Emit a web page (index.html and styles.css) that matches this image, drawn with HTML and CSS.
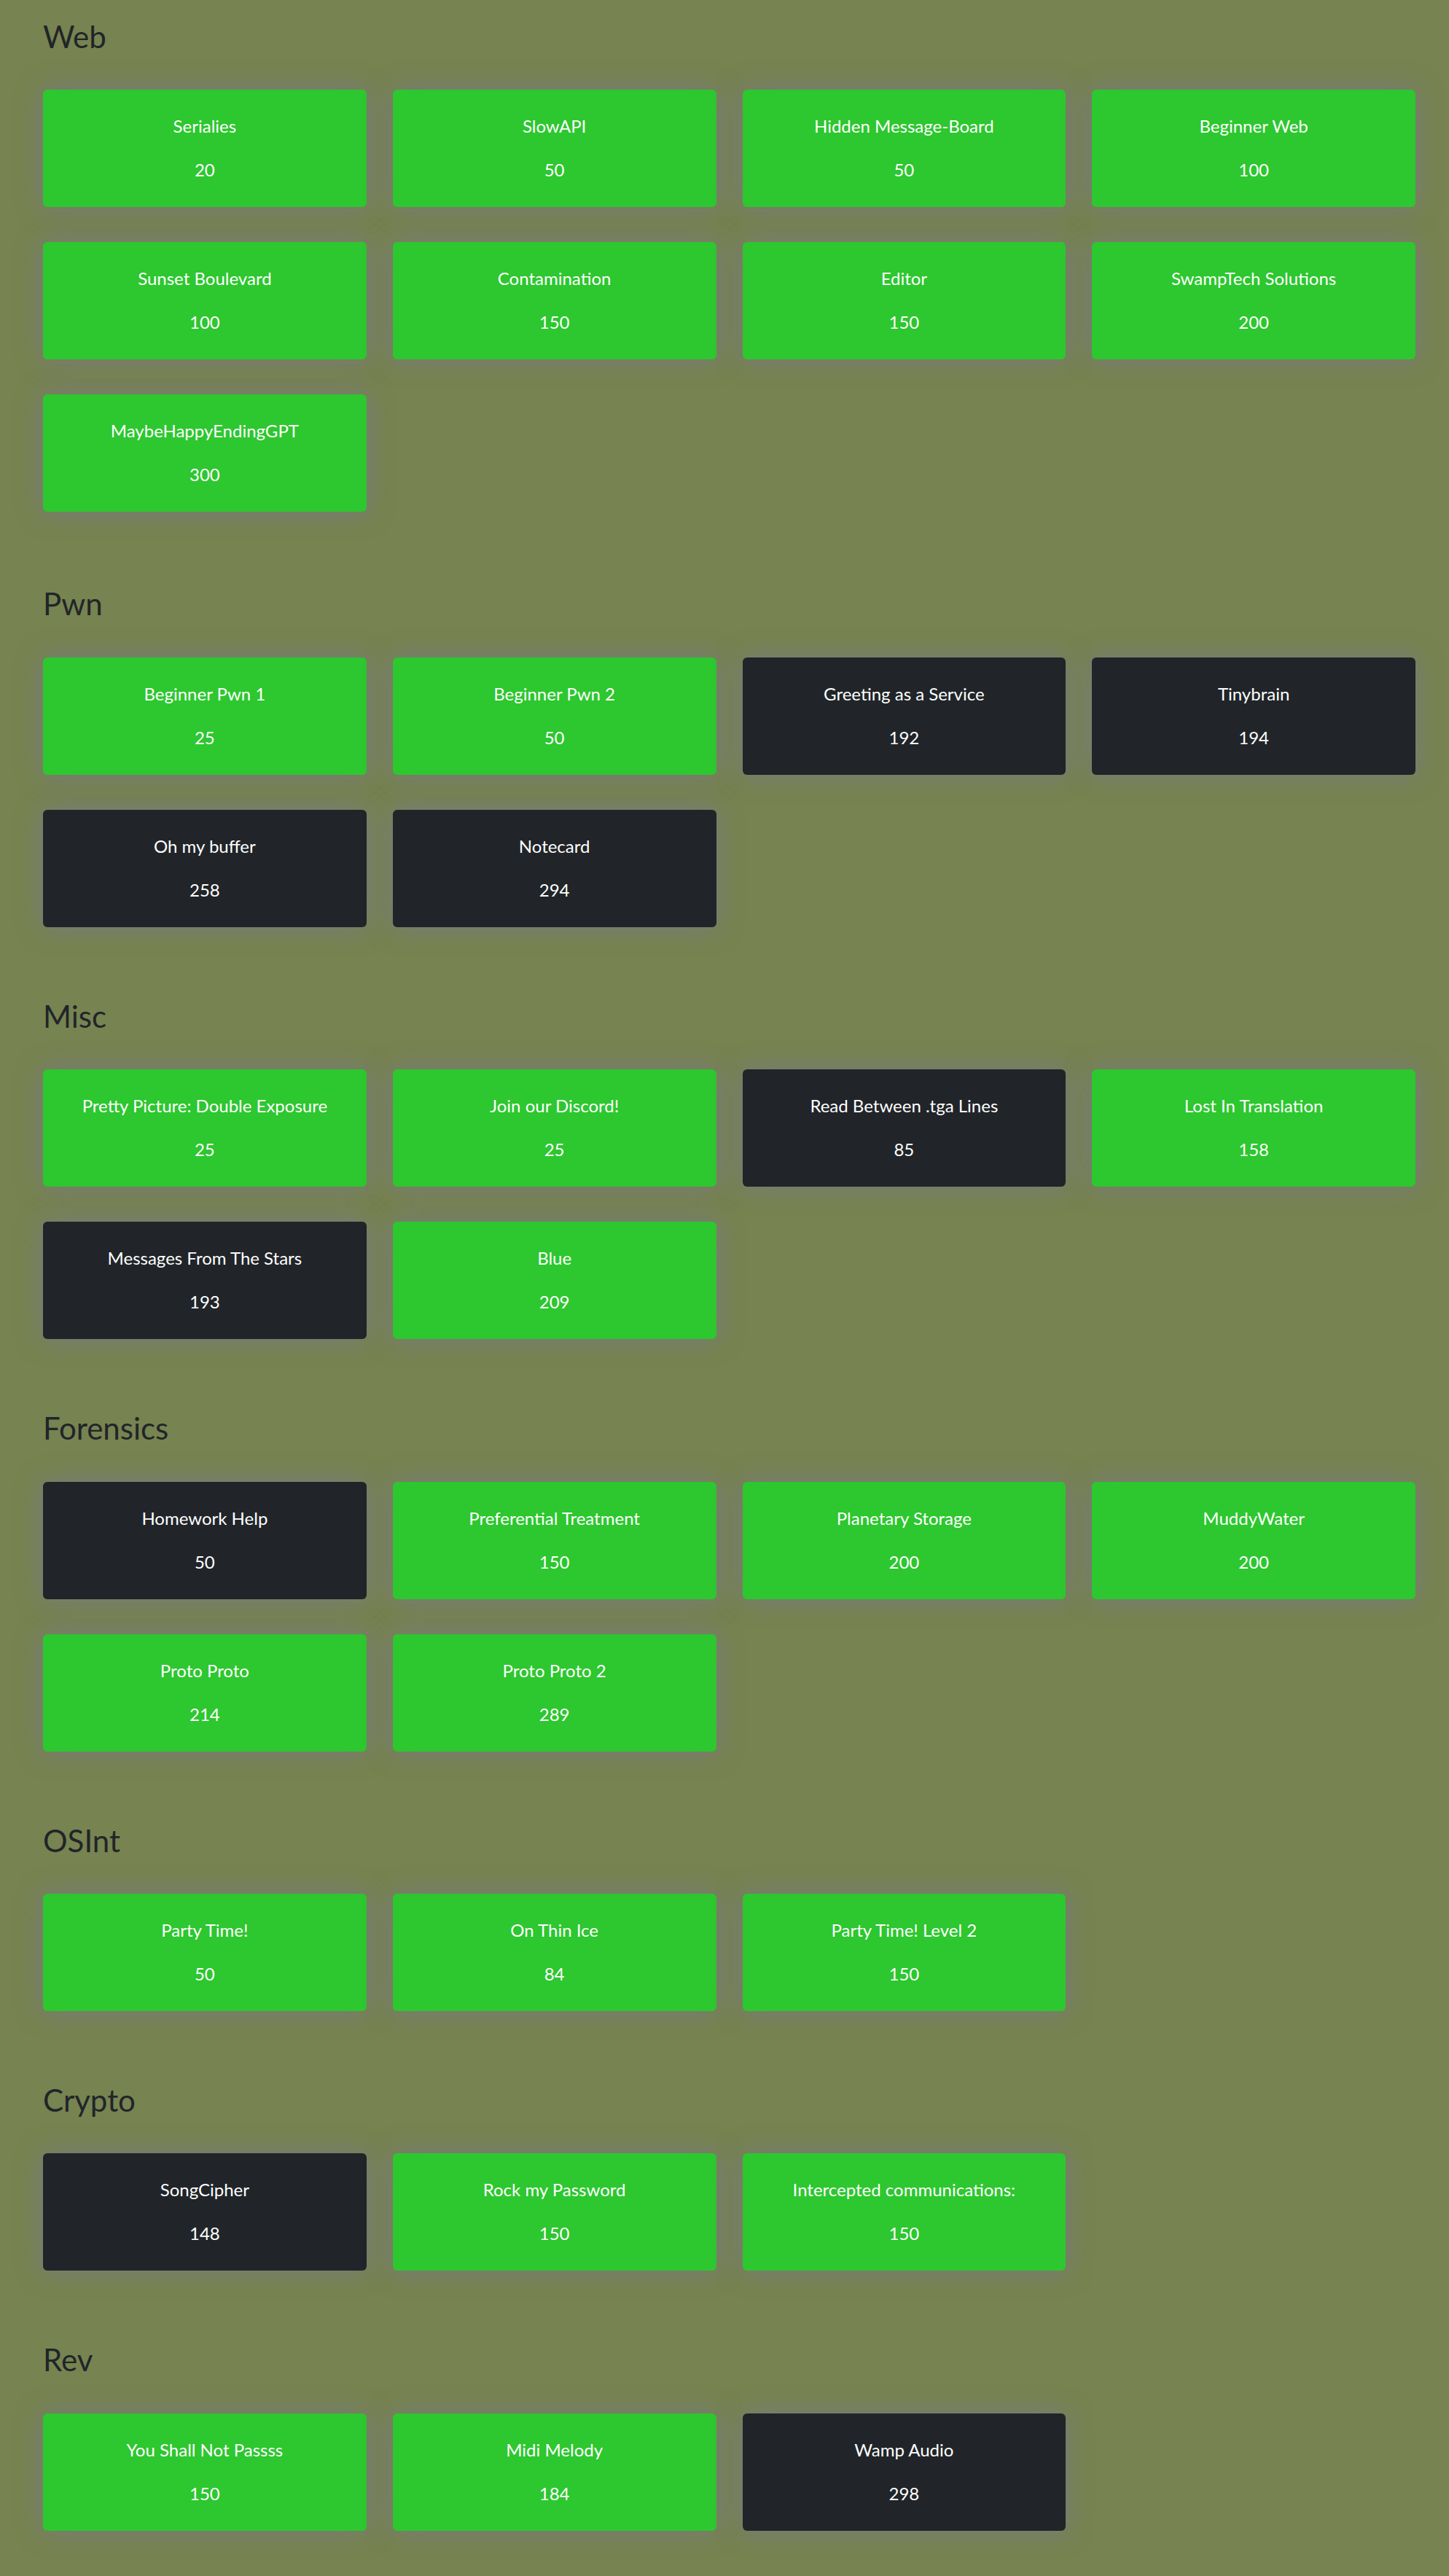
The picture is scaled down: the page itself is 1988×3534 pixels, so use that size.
FILE: index.html
```html
<!DOCTYPE html>
<html lang="en">
<head>
<meta charset="utf-8">
<title>Challenges</title>
<link rel="stylesheet" href="styles.css">
</head>
<body>
<main class="board">
  <section class="category">
    <h2 class="category-title">Web</h2>
    <div class="grid">
      <div class="card solved"><div class="card-name">Serialies</div><div class="card-points">20</div></div>
      <div class="card solved"><div class="card-name">SlowAPI</div><div class="card-points">50</div></div>
      <div class="card solved"><div class="card-name">Hidden Message-Board</div><div class="card-points">50</div></div>
      <div class="card solved"><div class="card-name">Beginner Web</div><div class="card-points">100</div></div>
      <div class="card solved"><div class="card-name">Sunset Boulevard</div><div class="card-points">100</div></div>
      <div class="card solved"><div class="card-name">Contamination</div><div class="card-points">150</div></div>
      <div class="card solved"><div class="card-name">Editor</div><div class="card-points">150</div></div>
      <div class="card solved"><div class="card-name">SwampTech Solutions</div><div class="card-points">200</div></div>
      <div class="card solved"><div class="card-name">MaybeHappyEndingGPT</div><div class="card-points">300</div></div>
    </div>
  </section>

  <section class="category">
    <h2 class="category-title">Pwn</h2>
    <div class="grid">
      <div class="card solved"><div class="card-name">Beginner Pwn 1</div><div class="card-points">25</div></div>
      <div class="card solved"><div class="card-name">Beginner Pwn 2</div><div class="card-points">50</div></div>
      <div class="card open"><div class="card-name">Greeting as a Service</div><div class="card-points">192</div></div>
      <div class="card open"><div class="card-name">Tinybrain</div><div class="card-points">194</div></div>
      <div class="card open"><div class="card-name">Oh my buffer</div><div class="card-points">258</div></div>
      <div class="card open"><div class="card-name">Notecard</div><div class="card-points">294</div></div>
    </div>
  </section>

  <section class="category">
    <h2 class="category-title">Misc</h2>
    <div class="grid">
      <div class="card solved"><div class="card-name">Pretty Picture: Double Exposure</div><div class="card-points">25</div></div>
      <div class="card solved"><div class="card-name">Join our Discord!</div><div class="card-points">25</div></div>
      <div class="card open"><div class="card-name">Read Between .tga Lines</div><div class="card-points">85</div></div>
      <div class="card solved"><div class="card-name">Lost In Translation</div><div class="card-points">158</div></div>
      <div class="card open"><div class="card-name">Messages From The Stars</div><div class="card-points">193</div></div>
      <div class="card solved"><div class="card-name">Blue</div><div class="card-points">209</div></div>
    </div>
  </section>

  <section class="category">
    <h2 class="category-title">Forensics</h2>
    <div class="grid">
      <div class="card open"><div class="card-name">Homework Help</div><div class="card-points">50</div></div>
      <div class="card solved"><div class="card-name">Preferential Treatment</div><div class="card-points">150</div></div>
      <div class="card solved"><div class="card-name">Planetary Storage</div><div class="card-points">200</div></div>
      <div class="card solved"><div class="card-name">MuddyWater</div><div class="card-points">200</div></div>
      <div class="card solved"><div class="card-name">Proto Proto</div><div class="card-points">214</div></div>
      <div class="card solved"><div class="card-name">Proto Proto 2</div><div class="card-points">289</div></div>
    </div>
  </section>

  <section class="category">
    <h2 class="category-title">OSInt</h2>
    <div class="grid">
      <div class="card solved"><div class="card-name">Party Time!</div><div class="card-points">50</div></div>
      <div class="card solved"><div class="card-name">On Thin Ice</div><div class="card-points">84</div></div>
      <div class="card solved"><div class="card-name">Party Time! Level 2</div><div class="card-points">150</div></div>
    </div>
  </section>

  <section class="category">
    <h2 class="category-title">Crypto</h2>
    <div class="grid">
      <div class="card open"><div class="card-name">SongCipher</div><div class="card-points">148</div></div>
      <div class="card solved"><div class="card-name">Rock my Password</div><div class="card-points">150</div></div>
      <div class="card solved"><div class="card-name">Intercepted communications:</div><div class="card-points">150</div></div>
    </div>
  </section>

  <section class="category">
    <h2 class="category-title">Rev</h2>
    <div class="grid">
      <div class="card solved"><div class="card-name">You Shall Not Passss</div><div class="card-points">150</div></div>
      <div class="card solved"><div class="card-name">Midi Melody</div><div class="card-points">184</div></div>
      <div class="card open"><div class="card-name">Wamp Audio</div><div class="card-points">298</div></div>
    </div>
  </section>
</main>
</body>
</html>
```

FILE: styles.css
```css
html, body {
  margin: 0;
  padding: 0;
}

body {
  background: #778350;
  font-family: Lato, "Open Sans", "Liberation Sans", sans-serif;
  color: #212529;
  min-height: 3534px;
}

.board {
  padding: 25px 46px 40px 59px;
}

.category {
  margin-bottom: 97px;
}

.category:first-child {
  margin-bottom: 101px;
}

.category:last-child {
  margin-bottom: 0;
}

.category-title {
  margin: 0 0 48px 0;
  font-size: 42px;
  font-weight: 400;
  line-height: 1.2;
  color: #212529;
}

.grid {
  display: grid;
  grid-template-columns: repeat(4, 1fr);
  column-gap: 36px;
  row-gap: 48px;
}

.card {
  box-sizing: border-box;
  height: 161px;
  padding: 33px 16px;
  border-radius: 6px;
  text-align: center;
  color: #ffffff;
  font-size: 24px;
  line-height: 33px;
  box-shadow: 0 0 34px rgba(120, 120, 136, 0.85);
}

.card.solved {
  background: #2dc72f;
}

.card.open {
  background: #212529;
}

.card-name {
  margin-bottom: 27px;
}
```
